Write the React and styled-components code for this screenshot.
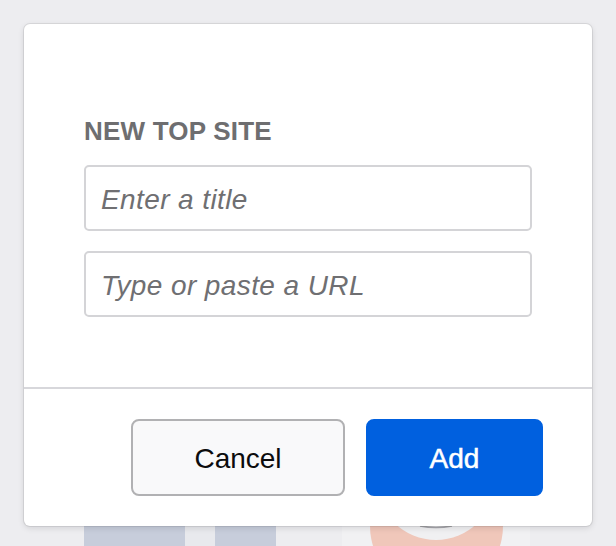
import React from 'react';
import styled, { createGlobalStyle } from 'styled-components';

const GlobalStyle = createGlobalStyle`
	html, body {
		margin: 0;
		padding: 0;
		background: #ededf0;
	}
	body {
		font-family: "Liberation Sans", Arial, sans-serif;
	}
`;

const Page = styled.div`
	position: relative;
	width: 616px;
	height: 546px;
	overflow: hidden;
	background: #ededf0;
`;

const TopSites = styled.div`
	display: flex;
	padding: 476px 0 0 84px;
	gap: 66px;
`;

const Tile = styled.div`
	display: flex;
	gap: 30px;
	height: 100px;
	width: ${(props) => props.width}px;
	background: ${(props) => props.bg};
`;

const Screenshot = styled.div`
	width: ${(props) => props.width}px;
	background: #c7cddb;
`;

const Modal = styled.div`
	position: absolute;
	top: 24px;
	left: 24px;
	width: 568px;
	background: #fff;
	border-radius: 6px;
	box-shadow: 0 0 0 1px rgba(12, 12, 13, 0.08), 0 2px 6px rgba(12, 12, 13, 0.12);
`;

const Form = styled.div`
	display: flex;
	flex-direction: column;
	gap: 20px;
	padding: 92px 60px 70px 60px;
`;

const Title = styled.h3`
	margin: 0 0 -1px 0;
	font-size: 26px;
	line-height: 30px;
	font-weight: bold;
	letter-spacing: 0.2px;
	color: #6e6e70;
	text-transform: uppercase;
`;

const Field = styled.input`
	box-sizing: border-box;
	width: 448px;
	height: 66px;
	padding: 3px 15px 0 15px;
	border: 2px solid #d4d4d7;
	border-radius: 5px;
	font-family: "Liberation Sans", Arial, sans-serif;
	font-size: 28px;
	letter-spacing: 0.4px;
	color: #0c0c0d;
	outline: none;
	&::placeholder {
		color: #6f6f72;
		font-style: italic;
	}
`;

const Actions = styled.div`
	display: flex;
	justify-content: flex-end;
	gap: 21px;
	padding: 30px 49px 30px 0;
	border-top: 2px solid #d7d7db;
`;

const Button = styled.button`
	box-sizing: border-box;
	width: ${(props) => props.width}px;
	height: 77px;
	padding: 3px 0 0 0;
	border-radius: 8px;
	font-family: "Liberation Sans", Arial, sans-serif;
	font-size: 28px;
	cursor: pointer;
	border: 2px solid ${(props) => (props.primary ? '#0060df' : '#b1b1b3')};
	background: ${(props) => (props.primary ? '#0060df' : '#f9f9fa')};
	color: ${(props) => (props.primary ? '#fff' : '#0c0c0d')};
	-webkit-text-stroke: ${(props) => (props.primary ? '0.5px #fff' : '0')};
`;

function Favicon() {
	return (
		<svg width="188" height="100" viewBox="0 0 188 100">
			<circle cx="94.5" cy="50" r="66.5" fill="#f0c7ba" />
			<circle cx="94" cy="5" r="59" fill="#f0f0f2" />
			<path d="M78 50 Q94 53 110 50" stroke="#a6a6aa" strokeWidth="1.5" fill="none" />
		</svg>
	);
}

export default function App() {
	return (
		<Page>
			<GlobalStyle />
			<TopSites>
				<Tile width={192} bg="#e8e9ed">
					<Screenshot width={101} />
					<Screenshot width={61} />
				</Tile>
				<Tile width={188} bg="#f1f1f3">
					<Favicon />
				</Tile>
			</TopSites>
			<Modal>
				<Form>
					<Title>New top site</Title>
					<Field type="text" placeholder="Enter a title" />
					<Field type="text" placeholder="Type or paste a URL" />
				</Form>
				<Actions>
					<Button width={214}>Cancel</Button>
					<Button width={177} primary>
						Add
					</Button>
				</Actions>
			</Modal>
		</Page>
	);
}
